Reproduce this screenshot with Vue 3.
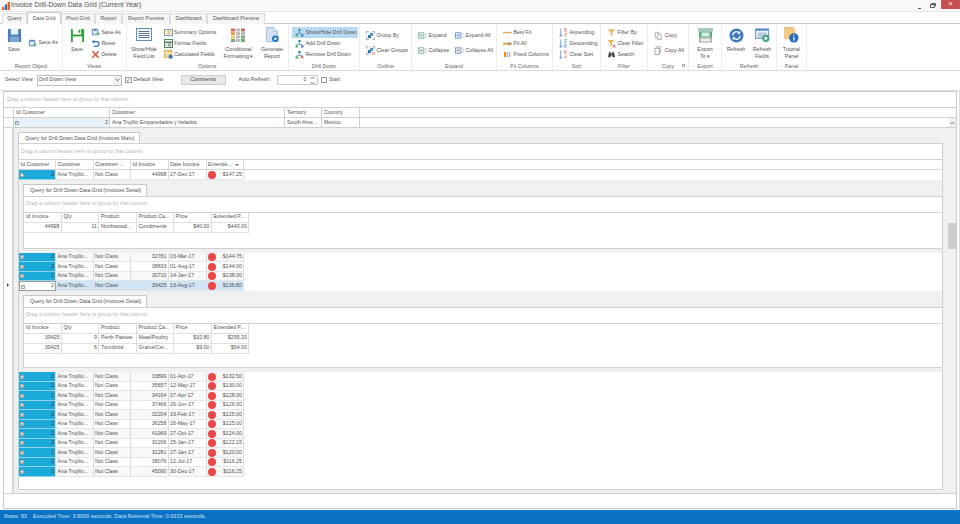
<script setup>
const tabs = [
  { t: 'Query', w: 25 }, { t: 'Data Grid', w: 34, active: true }, { t: 'Pivot Grid', w: 34 }, { t: 'Report', w: 27 },
  { t: 'Report Preview', w: 48 }, { t: 'Dashboard', w: 37 }, { t: 'Dashboard Preview', w: 58 }
]
const rowsA = [
  ['32781', '03-Mar-17', '$144.75'], ['38833', '01-Aug-17', '$144.00'], ['30710', '14-Jan-17', '$138.00']
]
const rowsB = [
  ['33899', '01-Apr-17', '$132.50'], ['35657', '12-May-17', '$130.00'], ['34164', '07-Apr-17', '$128.00'],
  ['37466', '26-Jun-17', '$126.00'], ['32204', '19-Feb-17', '$125.00'], ['36258', '26-May-17', '$125.00'],
  ['41969', '27-Oct-17', '$124.00'], ['31206', '25-Jan-17', '$122.15'], ['31281', '27-Jan-17', '$120.00'],
  ['38076', '12-Jul-17', '$116.25'], ['45090', '30-Dec-17', '$116.25']
]
const mainHead = ['Id Customer', 'Customer', 'Customer ...', 'Id Invoice', 'Date Invoice', 'Extende...']
const detailHead = ['Id Invoice', 'Qty', 'Product', 'Product Ca...', 'Price', 'Extended P...']
const detail1 = [['44998', '11', 'Northwood...', 'Condiments', '$40.00', '$440.00']]
const detail2 = [
  ['39425', '9', 'Perth Pasties', 'Meat/Poultry', '$32.80', '$295.20'],
  ['39425', '6', 'Tunnbröd', 'Grains/Cer...', '$9.00', '$54.00']
]
const col2 = (a, b) => [{ i: a[0], t: a[1] }, { i: b[0], t: b[1] }]
const smallSets = {
  views: [['saveas', 'Save As'], ['reset', 'Reset'], ['del', 'Delete']],
  options: [['sum', 'Summary Options'], ['fmt', 'Format Fields'], ['calc', 'Calculated Fields']],
  drill: [['tree', 'Show/Hide Drill Down'], ['tree', 'Add Drill Down'], ['treex', 'Remove Drill Down']],
  outline: col2(['group', 'Group By'], ['cleargroup', 'Clear Groups']),
  exp1: col2(['expg', 'Expand'], ['colg', 'Collapse']),
  exp2: col2(['expb', 'Expand All'], ['colb', 'Collapse All']),
  fit: [['best', 'Best Fit'], ['fitall', 'Fit All'], ['fixed', 'Fixed Columns']],
  sort: [['asc', 'Ascending'], ['desc', 'Descending'], ['clearsort', 'Clear Sort']],
  filter: [['funnel', 'Filter By'], ['funnelx', 'Clear Filter'], ['binoc', 'Search']],
  copy: col2(['copy', 'Copy'], ['copy2', 'Copy All'])
}
const norm = (list) => list.map((x) => (Array.isArray(x) ? { i: x[0], t: x[1] } : x))
const sets = Object.fromEntries(Object.entries(smallSets).map(([k, v]) => [k, norm(v)]))
</script>

<template>
  <div class="app">
    <svg class="defs" width="0" height="0">
      <symbol id="logo" viewBox="0 0 10 10"><rect x="0" y="6" width="3" height="4" fill="#e8632a"/><rect x="3.500" y="3" width="3" height="7" fill="#2f6fc0"/><rect x="7" y="0" width="3" height="10" fill="#e8632a"/></symbol>
      <symbol id="saveb" viewBox="0 0 16 16"><path d="M1 1h14v14H1z" fill="#4a7cb8"/><rect x="4" y="1" width="8" height="6" fill="#e8f0f8"/><rect x="3" y="9" width="10" height="6" fill="#7ea5d4"/></symbol>
      <symbol id="saveg" viewBox="0 0 16 16"><path d="M1 1h14v14H1z" fill="#2ba13a"/><rect x="3" y="1" width="9" height="6" fill="#fff"/><rect x="9" y="2" width="2" height="3" fill="#2ba13a"/><rect x="3" y="9" width="10" height="6" fill="#fff"/></symbol>
      <symbol id="saveas" viewBox="0 0 10 10"><path d="M1.500 1.500h6v6h-6z" fill="#dfeaf5" stroke="#4f7fb8"/><rect x="3" y="1" width="3" height="2" fill="#4f7fb8"/><path d="M6 6.500h3.500M8 5v3" stroke="#4aa560"/></symbol>
      <symbol id="reset" viewBox="0 0 10 10"><path d="M2 3h4.500a2.500 2.500 0 0 1 0 5H3" fill="none" stroke="#2f6fc0" stroke-width="1.300"/><path d="M3.500 .8 1 3l2.500 2.200z" fill="#2f6fc0"/></symbol>
      <symbol id="del" viewBox="0 0 10 10"><path d="M1.500 1.500l7 7M8.500 1.500l-7 7" stroke="#e2483a" stroke-width="1.500"/></symbol>
      <symbol id="sum" viewBox="0 0 10 10"><rect x=".5" y="1.500" width="9" height="7" fill="#fdf5e0" stroke="#6c8fbc"/><path d="M3 3.500h4L5 5l2 1.500H3" fill="none" stroke="#d89a2b" stroke-width=".8"/></symbol>
      <symbol id="fmt" viewBox="0 0 10 10"><rect x=".5" y=".5" width="9" height="9" fill="#fff" stroke="#3d7a4a"/><path d="M.5 3.500h9" stroke="#3d7a4a" stroke-width="1.500"/><path d="M2 5.500h1M2 7.500h1M4.500 5.500h3.500M4.500 7.500h3.500" stroke="#555"/></symbol>
      <symbol id="calc" viewBox="0 0 10 10"><rect x=".5" y=".5" width="8" height="8" fill="#efc56e" stroke="#d8a445"/><path d="M3 .5v8M.5 3.500h8" stroke="#fff"/><circle cx="7.500" cy="7.500" r="2.300" fill="#2f78c4"/></symbol>
      <symbol id="fieldlist" viewBox="0 0 16 13"><rect x=".5" y=".5" width="15" height="12" fill="#f3f7fb" stroke="#5d8fc6"/><path d="M2.500 3.500h11M2.500 5.500h11M2.500 7.500h11M2.500 9.500h11" stroke="#5c7290"/></symbol>
      <symbol id="cond" viewBox="0 0 15 14"><g fill="#d8694f"><rect x="0" y="0" width="4" height="3"/><rect x="0" y="3.500" width="4" height="3" fill="#e3a04d"/><rect x="0" y="7" width="4" height="3" fill="#e8c870"/><rect x="0" y="10.500" width="4" height="3" fill="#6db07a"/></g><g fill="#bdbdbd"><rect x="5" y="0" width="4" height="3"/><rect x="5" y="3.500" width="4" height="3"/><rect x="5" y="7" width="4" height="3"/><rect x="5" y="10.500" width="4" height="3"/><rect x="10" y="0" width="4" height="3" fill="#d8694f"/><rect x="10" y="3.500" width="4" height="3"/><rect x="10" y="7" width="4" height="3" fill="#6db07a"/><rect x="10" y="10.500" width="4" height="3" fill="#6db07a"/></g></symbol>
      <symbol id="report" viewBox="0 0 14 17"><path d="M.5.5h8l4 4v11H.5z" fill="#cfe0f2" stroke="#9fbbd9"/><path d="M8.500.5v4h4" fill="#fff" stroke="#9fbbd9"/><circle cx="10" cy="12.500" r="3.500" fill="#1f78c8"/><circle cx="10" cy="12.500" r="1.400" fill="#fff"/></symbol>
      <symbol id="tree" viewBox="0 0 10 10"><path d="M5 3v3M2 8V6h6v2" fill="none" stroke="#5a8fb0" stroke-width=".8"/><rect x="3.500" y="1" width="3" height="2.500" fill="#4c9aa8"/><rect x=".5" y="7" width="3" height="2.500" fill="#55b07a"/><rect x="6.500" y="7" width="3" height="2.500" fill="#4f83c4"/></symbol>
      <symbol id="treex" viewBox="0 0 10 10"><path d="M5 3v3M2 8V6h6v2" fill="none" stroke="#5a8fb0" stroke-width=".8"/><rect x="3.500" y="1" width="3" height="2.500" fill="#4c9aa8"/><rect x=".5" y="7" width="3" height="2.500" fill="#55b07a"/><path d="M6.500 6.500l3 3M9.500 6.500l-3 3" stroke="#d8483a"/></symbol>
      <symbol id="group" viewBox="0 0 10 10"><path d="M.5 3V.5H3M7 .5h2.500V3M.5 7v2.500H3M7 9.500h2.500V7" fill="none" stroke="#7d8f9f" stroke-width=".8"/><rect x="2" y="4.500" width="3.500" height="3.500" fill="#2f70b5"/><rect x="4.500" y="2" width="3.500" height="3.500" fill="#4c93d0"/></symbol>
      <symbol id="cleargroup" viewBox="0 0 10 10"><path d="M.5 3V.5H3M7 .5h2.500V3M.5 7v2.500H3" fill="none" stroke="#7d8f9f" stroke-width=".8"/><rect x="2" y="4.500" width="3.500" height="3.500" fill="#2f70b5"/><rect x="4.500" y="2" width="3.500" height="3.500" fill="#4c93d0"/><path d="M7 7l2.500 2.500M9.500 7L7 9.500" stroke="#d8483a"/></symbol>
      <symbol id="expg" viewBox="0 0 10 10"><rect x=".5" y="2" width="6" height="6" fill="#e6f3ec" stroke="#7cb8a0"/><path d="M2 5h3M3.500 3.500v3" stroke="#7cb8a0" stroke-width=".8"/><path d="M8 3.500h1.500M8 6.500h1.500" stroke="#999"/></symbol>
      <symbol id="colg" viewBox="0 0 10 10"><rect x=".5" y="2" width="6" height="6" fill="#e6f3ec" stroke="#7cb8a0"/><path d="M2 5h3" stroke="#d8604a"/><path d="M8 3.500h1.500M8 6.500h1.500" stroke="#999"/></symbol>
      <symbol id="expb" viewBox="0 0 10 10"><rect x=".5" y="2" width="6" height="6" fill="#e3edf8" stroke="#6a96cc"/><path d="M2 5h3M3.500 3.500v3" stroke="#6a96cc" stroke-width=".8"/><path d="M8 3.500h1.500M8 6.500h1.500" stroke="#999"/></symbol>
      <symbol id="colb" viewBox="0 0 10 10"><rect x=".5" y="2" width="6" height="6" fill="#e3edf8" stroke="#6a96cc"/><path d="M2 5h3" stroke="#d8604a"/><path d="M8 3.500h1.500M8 6.500h1.500" stroke="#999"/></symbol>
      <symbol id="best" viewBox="0 0 10 10"><path d="M0 5h3M7 5h3" stroke="#e89a2e"/><path d="M3 3.500 5 5 3 6.500zM7 3.500 5 5l2 1.500z" fill="#e07a28"/></symbol>
      <symbol id="fitall" viewBox="0 0 10 10"><rect x="0" y="4" width="10" height="2.400" fill="#eca24a"/><path d="M6 2.800 9.500 5.200 6 7.600z" fill="#999"/></symbol>
      <symbol id="fixed" viewBox="0 0 10 10"><rect x="1" y="2" width="2.500" height="6" fill="#ee8a1e"/><rect x="4.300" y="2" width="1.600" height="6" fill="#bbb"/><rect x="6.800" y="2" width="1.600" height="6" fill="#bbb"/></symbol>
      <symbol id="asc" viewBox="0 0 10 10"><path d="M2 .5v8.500M.5 7.500 2 9.500l1.500-2" fill="none" stroke="#2f78c4" stroke-width=".8"/><path d="M6 .5h2v3H6zM6 6h2.500L6 9h2.500" fill="none" stroke="#d8604a" stroke-width=".7"/></symbol>
      <symbol id="desc" viewBox="0 0 10 10"><path d="M2 .5v8.500M.5 7.500 2 9.500l1.500-2" fill="none" stroke="#2f78c4" stroke-width=".8"/><path d="M6 .5h2.500L6 3.500h2.500M6 6h2v3H6z" fill="none" stroke="#3d8bd0" stroke-width=".7"/></symbol>
      <symbol id="clearsort" viewBox="0 0 10 10"><path d="M2 .5v8.500M.5 7.500 2 9.500l1.500-2" fill="none" stroke="#2f78c4" stroke-width=".8"/><path d="M6 1h2v3H6z" fill="none" stroke="#d8604a" stroke-width=".7"/><path d="M5.500 6l3.500 3.500M9 6 5.500 9.500" stroke="#d8604a" stroke-width=".7"/></symbol>
      <symbol id="funnel" viewBox="0 0 10 10"><path d="M1 1.500h8L6 5v4L4 8V5z" fill="#edb45c"/></symbol>
      <symbol id="funnelx" viewBox="0 0 10 10"><path d="M.5 1h7.500L5.500 4.500v3.500L3.500 7V4.500z" fill="#edb45c"/><path d="M6.500 6.500l3 3M9.500 6.500l-3 3" stroke="#d8483a"/></symbol>
      <symbol id="binoc" viewBox="0 0 10 10"><path d="M1 8 2.500 2h1.500v2h2V2h1.500L9 8H6V6H4v2z" fill="#444"/></symbol>
      <symbol id="copy" viewBox="0 0 10 10"><path d="M1.500 1.500h4v6h-4z" fill="#fff" stroke="#aaa"/><path d="M4 3.500h4v6H4z" fill="#fff" stroke="#aaa"/></symbol>
      <symbol id="copy2" viewBox="0 0 10 10"><path d="M2.500.5h5v6.500h-5z" fill="#f4f4f4" stroke="#bbb"/><path d="M1 2.500h5v7H1z" fill="#fff" stroke="#999"/></symbol>
      <symbol id="export" viewBox="0 0 15 15"><rect x="0" y="0" width="15" height="3.500" fill="#a9c7b7"/><rect x="1" y="3.500" width="13" height="6" fill="#5cae8a"/><rect x="3.500" y="4.500" width="8" height="4" fill="#d9efe4"/><rect x="1" y="9.500" width="13" height="5" fill="#a6a6a6"/><rect x="2.500" y="10.500" width="10" height="3" fill="#eee"/></symbol>
      <symbol id="refresh" viewBox="0 0 14 14"><circle cx="7" cy="7" r="6.500" fill="#3d78bd"/><path d="M3.500 7a3.500 3.500 0 0 1 6-2.500M10.500 7a3.500 3.500 0 0 1-6 2.500" fill="none" stroke="#eaf2fb" stroke-width="1.300"/><path d="M10.500 2.500v3h-3zM3.500 11.500v-3h3z" fill="#eaf2fb"/></symbol>
      <symbol id="rfields" viewBox="0 0 16 15"><rect x=".5" y=".5" width="14" height="10" fill="#f1f6fb" stroke="#5d8fc6"/><rect x=".5" y=".5" width="14" height="2" fill="#5d8fc6"/><path d="M2.500 5h10M2.500 7h7M2.500 9h7" stroke="#8aa5c4"/><circle cx="11.500" cy="10.500" r="4" fill="#4aa587"/><circle cx="11.500" cy="10.500" r="1.800" fill="#d8efe5"/></symbol>
      <symbol id="tutorial" viewBox="0 0 16 17"><path d="M0 0h11v2H0z" fill="#e9bf74"/><path d="M0 2h12v11H0z" fill="#f3cb85"/><circle cx="10.500" cy="11.500" r="5" fill="#2a6db5"/><rect x="10" y="10.500" width="1.200" height="4" fill="#fff"/><rect x="10" y="8.300" width="1.200" height="1.300" fill="#fff"/></symbol>
    </svg>

    <header class="title">
      <svg class="logo"><use href="#logo"/></svg>
      <span class="title-text">Invoice Drill-Down Data Grid (Current Year)</span>
      <span class="spacer"></span>
      <span class="win-min"></span>
      <svg class="win-rest" viewBox="0 0 7 6"><path d="M2 1.500V.5h4.500v3H5.500M.5 1.800h4.500v3.700H.5z" fill="none" stroke="#333"/></svg>
      <span class="win-close">×</span>
    </header>

    <nav class="tabs">
      <span v-for="t in tabs" :key="t.t" class="tab" :class="{ on: t.active }" :style="{ width: t.w + 'px' }">{{ t.t }}</span>
    </nav>

    <section class="ribbon">
      <div class="grp" style="width:63px">
        <div class="grp-body">
          <div class="lg" style="width:28px"><svg class="i15"><use href="#saveb"/></svg><span>Save</span></div>
          <div class="stack mid"><div class="sm"><svg class="i9"><use href="#saveas"/></svg>Save As</div></div>
        </div>
        <div class="grp-label">Report Object</div>
      </div>
      <div class="grp" style="width:63.500px">
        <div class="grp-body">
          <div class="lg" style="width:28px"><svg class="i15"><use href="#saveg"/></svg><span>Save</span></div>
          <div class="stack"><div v-for="s in sets.views" :key="s.t" class="sm"><svg class="i9"><use :href="'#' + s.i"/></svg>{{ s.t }}</div></div>
        </div>
        <div class="grp-label">Views</div>
      </div>
      <div class="grp" style="width:162.500px">
        <div class="grp-body">
          <div class="lg" style="width:35px"><svg class="i-f"><use href="#fieldlist"/></svg><span>Show/Hide<br>Field List</span></div>
          <div class="stack opts"><div v-for="s in sets.options" :key="s.t" class="sm"><svg class="i9"><use :href="'#' + s.i"/></svg>{{ s.t }}</div></div>
          <div class="lg" style="width:33px"><svg class="i15"><use href="#cond"/></svg><span>Conditional<br>Formatting ▾</span></div>
          <div class="lg" style="width:34px"><svg class="i15 tall"><use href="#report"/></svg><span>Generate<br>Report</span></div>
        </div>
        <div class="grp-label">Options</div>
      </div>
      <div class="grp" style="width:71px">
        <div class="grp-body pad3">
          <div class="stack wide"><div v-for="(s, i) in sets.drill" :key="s.t" class="sm" :class="{ act: i === 0 }"><svg class="i9"><use :href="'#' + s.i"/></svg>{{ s.t }}</div></div>
        </div>
        <div class="grp-label">Drill Down</div>
      </div>
      <div class="grp" style="width:52px">
        <div class="grp-body pad6">
          <div class="stack two"><div v-for="s in sets.outline" :key="s.t" class="sm"><svg class="i9"><use :href="'#' + s.i"/></svg>{{ s.t }}</div></div>
        </div>
        <div class="grp-label">Outline</div>
      </div>
      <div class="grp" style="width:85px">
        <div class="grp-body pad6">
          <div class="stack two" style="width:37px"><div v-for="s in sets.exp1" :key="s.t" class="sm"><svg class="i9"><use :href="'#' + s.i"/></svg>{{ s.t }}</div></div>
          <div class="stack two"><div v-for="s in sets.exp2" :key="s.t" class="sm"><svg class="i9"><use :href="'#' + s.i"/></svg>{{ s.t }}</div></div>
        </div>
        <div class="grp-label">Expand</div>
      </div>
      <div class="grp" style="width:56px">
        <div class="grp-body pad6"><div class="stack"><div v-for="s in sets.fit" :key="s.t" class="sm"><svg class="i9"><use :href="'#' + s.i"/></svg>{{ s.t }}</div></div></div>
        <div class="grp-label">Fit Columns</div>
      </div>
      <div class="grp" style="width:48px">
        <div class="grp-body pad6"><div class="stack"><div v-for="s in sets.sort" :key="s.t" class="sm"><svg class="i9"><use :href="'#' + s.i"/></svg>{{ s.t }}</div></div></div>
        <div class="grp-label">Sort</div>
      </div>
      <div class="grp" style="width:47px">
        <div class="grp-body pad6"><div class="stack"><div v-for="s in sets.filter" :key="s.t" class="sm"><svg class="i9"><use :href="'#' + s.i"/></svg>{{ s.t }}</div></div></div>
        <div class="grp-label">Filter</div>
      </div>
      <div class="grp" style="width:41px">
        <div class="grp-body pad6"><div class="stack two"><div v-for="s in sets.copy" :key="s.t" class="sm"><svg class="i9"><use :href="'#' + s.i"/></svg>{{ s.t }}</div></div></div>
        <div class="grp-label">Copy<i class="launcher"></i></div>
      </div>
      <div class="grp" style="width:33px">
        <div class="grp-body center"><div class="lg" style="width:33px"><svg class="i15"><use href="#export"/></svg><span>Export<br>To ▾</span></div></div>
        <div class="grp-label">Export</div>
      </div>
      <div class="grp" style="width:55px">
        <div class="grp-body center">
          <div class="lg" style="width:26px"><svg class="i15"><use href="#refresh"/></svg><span>Refresh</span></div>
          <div class="lg" style="width:26px"><svg class="i15"><use href="#rfields"/></svg><span>Refresh<br>Fields</span></div>
        </div>
        <div class="grp-label">Refresh</div>
      </div>
      <div class="grp" style="width:30px">
        <div class="grp-body center"><div class="lg" style="width:30px"><svg class="i15 tall"><use href="#tutorial"/></svg><span>Tutorial<br>Panel</span></div></div>
        <div class="grp-label">Panel</div>
      </div>
    </section>

    <section class="viewbar">
      <label class="lbl">Select View:</label>
      <div class="select"><span>Drill Down View</span><i class="sel-btn"><svg viewBox="0 0 6 4" width="5" height="4"><path d="M.5.5 3 3 5.500.5" fill="none" stroke="#555"/></svg></i></div>
      <span class="check on">✓</span><span class="chk-text dv">Default View</span>
      <button class="comments">Comments</button>
      <label class="lbl auto">Auto Refresh:</label>
      <div class="spin"><span>0</span><i class="spin-btn">
        <svg viewBox="0 0 5 9" width="5" height="9"><path d="M.5 3 2.500 1l2 2M.5 6l2 2 2-2" fill="none" stroke="#555" stroke-width=".8"/></svg></i></div>
      <span class="check start"></span><span class="chk-text">Start</span>
    </section>

    <main class="outer-wrap">
      <div class="outer">
        <div class="hint top-hint">Drag a column header here to group by that column</div>
        <div class="top-row head">
          <span class="ind-c"></span><span class="c c1">Id Customer</span><span class="c c2">Customer</span><span class="c c3">Territory</span><span class="c c4">Country</span>
        </div>
        <div class="top-row val">
          <span class="ind-c"></span>
          <span class="c c1 sel r"><i class="exp dark">−</i>2</span>
          <span class="c c2">Ana Trujillo Emparedados y helados</span>
          <span class="c c3">South Ame...</span>
          <span class="c c4">Mexico</span>
          <span class="fill-c"></span>
          <span class="sb-up"><svg viewBox="0 0 6 4" width="5" height="4"><path d="M.5 3.500 3 1l2.500 2.500" fill="none" stroke="#666"/></svg></span>
        </div>

        <div class="body">
          <div class="indicator"><span class="arrow"></span></div>
          <div class="content">
            <div class="tab-cap main-cap">Query for Drill Down Data Grid (Invoices Main)</div>
            <div class="panel">
              <div class="hint main-hint">Drag a column header here to group by that column</div>
              <div class="m-row m-head">
                <span v-for="(h, i) in mainHead" :key="h" class="mc" :class="{ sort: i === 5 }">{{ h }}<i v-if="i === 5" class="sort-ico"></i></span>
              </div>
              <div class="m-row">
                <span class="mc blue r"><i class="exp">−</i>2</span><span class="mc">Ana Trujillo...</span><span class="mc">Not Class</span>
                <span class="mc r">44998</span><span class="mc">27-Dec-17</span><span class="mc val-c"><i class="dot"></i>$147.25</span>
              </div>

              <div class="band">
                <div class="tab-cap">Query for Drill Down Data Grid (Invoices Detail)</div>
                <div class="d-panel">
                  <div class="hint d-hint">Drag a column header here to group by that column</div>
                  <div class="d-row d-head"><span v-for="h in detailHead" :key="h" class="dc">{{ h }}</span></div>
                  <div v-for="(r, i) in detail1" :key="i" class="d-row">
                    <span class="dc r">{{ r[0] }}</span><span class="dc r">{{ r[1] }}</span><span class="dc">{{ r[2] }}</span><span class="dc">{{ r[3] }}</span><span class="dc r">{{ r[4] }}</span><span class="dc r">{{ r[5] }}</span>
                  </div>
                </div>
              </div>

              <div v-for="(r, i) in rowsA" :key="r[0]" class="m-row" :class="{ alt: i % 2 === 0 }">
                <span class="mc blue r"><i class="exp">+</i>2</span><span class="mc">Ana Trujillo...</span><span class="mc">Not Class</span>
                <span class="mc r">{{ r[0] }}</span><span class="mc">{{ r[1] }}</span><span class="mc val-c"><i class="dot"></i>{{ r[2] }}</span>
              </div>
              <div class="m-row selected">
                <span class="mc focus r"><i class="exp dark">−</i>2</span><span class="mc">Ana Trujillo...</span><span class="mc">Not Class</span>
                <span class="mc r">39425</span><span class="mc">13-Aug-17</span><span class="mc val-c"><i class="dot"></i>$136.80</span>
              </div>

              <div class="band second">
                <div class="tab-cap">Query for Drill Down Data Grid (Invoices Detail)</div>
                <div class="d-panel">
                  <div class="hint d-hint">Drag a column header here to group by that column</div>
                  <div class="d-row d-head"><span v-for="h in detailHead" :key="h" class="dc">{{ h }}</span></div>
                  <div v-for="(r, i) in detail2" :key="i" class="d-row">
                    <span class="dc r">{{ r[0] }}</span><span class="dc r">{{ r[1] }}</span><span class="dc">{{ r[2] }}</span><span class="dc">{{ r[3] }}</span><span class="dc r">{{ r[4] }}</span><span class="dc r">{{ r[5] }}</span>
                  </div>
                </div>
              </div>

              <div v-for="(r, i) in rowsB" :key="r[0]" class="m-row" :class="{ alt: i % 2 === 0 }">
                <span class="mc blue r"><i class="exp">+</i>2</span><span class="mc">Ana Trujillo...</span><span class="mc">Not Class</span>
                <span class="mc r">{{ r[0] }}</span><span class="mc">{{ r[1] }}</span><span class="mc val-c"><i class="dot"></i>{{ r[2] }}</span>
              </div>
            </div>
          </div>
          <div class="scroll"><span class="thumb"></span></div>
        </div>
        <div class="foot"></div>
      </div>
    </main>

    <footer class="status"><span class="st-rows">Rows: 93</span><span>Executed Time: 3.8060 seconds. Data Retrieval Time: 0.0015 seconds.</span></footer>
  </div>
</template>

<style>
html, body { margin: 0; padding: 0; background: #fff; }
</style>

<style scoped>
* { box-sizing: border-box; }
.app { width: 960px; height: 524px; overflow: hidden; display: flex; flex-direction: column; font-family: "Liberation Sans", Arial, sans-serif; font-size: 5.3px; line-height: 1; color: #525252; background: #fff; }
.defs { position: absolute; }
.title { height: 12px; flex: none; display: flex; align-items: center; background: #f8f8f8; border-bottom: 1px solid #e6e6e6; padding-left: 2px; }
.logo { width: 8px; height: 8px; margin-right: 1px; }
.title-text { font-size: 6.8px; color: #555; }
.spacer { flex: 1; }
.win-min { width: 3px; height: 1px; background: #555; margin-top: 5px; margin-right: 9px; }
.win-rest { width: 6px; height: 5px; margin-right: 5px; }
.win-close { width: 19px; height: 9px; margin-top: -2px; background: #c75050; color: #fff; font-size: 8px; line-height: 8px; text-align: center; }

.tabs { height: 12px; flex: none; display: flex; gap: 0; padding-left: 2px; border-bottom: 1px solid #c8c8c8; }
.tab { height: 11px; margin-top: 1px; display: flex; align-items: center; justify-content: center; background: #f6f6f6; border: 1px solid #dcdcdc; border-bottom: 0; color: #555; }
.tab.on { background: #fff; height: 12px; margin-top: 0; border-color: #c8c8c8; position: relative; }

.ribbon { height: 47px; flex: none; display: flex; border-bottom: 1px solid #ddd; }
.grp { height: 46px; flex: none; display: flex; flex-direction: column; position: relative; border-right: 1px solid #ececec; margin: 0; }
.grp-body { flex: 1; display: flex; padding-top: 3px; padding-left: 0; min-height: 0; }
.grp-label { height: 9px; flex: none; text-align: center; color: #666; line-height: 10px; position: relative; }
.pad3 { padding-left: 3px; }
.pad6 { padding-left: 6px; }
.center { justify-content: center; }
.lg { display: flex; flex-direction: column; align-items: center; flex: none; text-align: center; line-height: 7px; margin-top: 1px; }
.lg span { margin-top: 3px; white-space: nowrap; }
.i15 { width: 15px; height: 15px; flex: none; }
.tall { height: 16px; margin-top: -1px; }
.i-f { width: 16px; height: 13px; margin-bottom: 2px; margin-top: 0; }
.i9 { width: 9px; height: 9px; margin-right: 1.500px; flex: none; }
.stack { display: flex; flex-direction: column; flex: none; padding-top: 0; }
.stack.mid { justify-content: center; height: 32px; }
.stack.two { padding-top: 3px; gap: 4px; }
.stack.wide { width: 66px; }
.stack.opts { width: 58.500px; margin-left: 2px; }
.sm { height: 11px; display: flex; align-items: center; white-space: nowrap; }
.sm.act { background: #b9d9f1; padding-left: 3px; margin-left: 0; }
.stack.wide .sm { padding-left: 3px; }
.launcher { position: absolute; right: 3px; top: 3px; width: 3px; height: 3px; border: 1px solid #aaa; }

.viewbar { height: 20px; flex: none; display: flex; align-items: center; padding: 0 0 1px 5px; border-bottom: 1px solid #ddd; }
.lbl { width: 32px; flex: none; }
.select { width: 85px; height: 11px; display: flex; align-items: center; border: 1px solid #bbb; padding-left: 1px; justify-content: space-between; }
.sel-btn { width: 8px; height: 9px; display: flex; align-items: center; justify-content: center; background: #f2f2f2; }
.check { width: 6.500px; height: 6.500px; border: 1px solid #999; margin-left: 3px; flex: none; display: flex; align-items: center; justify-content: center; font-size: 6px; font-style: normal; }
.chk-text { margin-left: 2px; }
.chk-text.dv { width: 31px; white-space: nowrap; }
.comments { width: 45px; height: 10px; margin-left: 16px; padding: 0; border: 1px solid #ccc; background: #e8e8e8; font: inherit; color: #444; }
.lbl.auto { margin-left: 13px; width: 38px; }
.spin { width: 41px; height: 10px; display: flex; align-items: center; justify-content: flex-end; border: 1px solid #ccc; }
.spin-btn { width: 8px; height: 8px; margin-left: 2px; display: flex; align-items: center; justify-content: center; }
.check.start { margin-left: 3px; }

.outer-wrap { flex: 1; min-height: 0; display: flex; padding: 0 2px 1.500px 3px; border-right: 1px solid #ddd; }
.outer { flex: 1; display: flex; flex-direction: column; border: 1px solid #ccc; min-width: 0; }
.hint { color: #b4b4b4; display: flex; align-items: center; flex: none; padding-left: 3px; }
.top-hint { height: 16px; border-bottom: 1px solid #d0d0d0; }
.top-row { height: 10px; flex: none; display: flex; border-bottom: 1px solid #d0d0d0; }
.ind-c { width: 10px; border-right: 1px solid #d0d0d0; flex: none; }
.c { height: 100%; display: flex; align-items: center; padding: 0 1px 0 2px; border-right: 1px solid #d0d0d0; flex: none; overflow: hidden; white-space: nowrap; }
.c1 { width: 96px; }
.c2 { width: 175px; }
.c3 { width: 37px; }
.c4 { width: 38px; }
.sel { background: #e6f0f8; }
.r { justify-content: flex-end; }
.fill-c { width: 589px; flex: none; }
.sb-up { flex: 1; display: flex; align-items: center; justify-content: center; background: #f0f0f0; }

.body { height: 366px; flex: none; display: flex; border-bottom: 1px solid #d0d0d0; }
.indicator { width: 10px; flex: none; border-right: 2px solid #d6d6d6; padding-top: 155px; display: flex; justify-content: center; }
.arrow { width: 0; height: 0; border-left: 2.500px solid #444; border-top: 2px solid transparent; border-bottom: 2px solid transparent; margin-right: 1px; }
.content { width: 934px; flex: none; background: #f0f0f0; padding: 4px 5px 3px 4px; display: flex; flex-direction: column; }
.tab-cap { width: 122px; height: 11px; flex: none; display: flex; align-items: center; padding: 1px 0 0 6px; background: #fff; border: 1px solid #c8c8c8; border-bottom: 0; white-space: nowrap; }
.panel { flex: 1; background: #fff; border: 1px solid #cfcfcf; }
.main-hint { height: 16px; border-bottom: 1px solid #d0d0d0; padding-left: 2px; }
.m-row { height: 9.500px; display: grid; grid-template-columns: 37px 37.500px 37.500px 37.500px 38px 37.500px; width: 225px; }
.m-head { height: 10px; border-bottom: 1px solid #d4d4d4; width: auto; }
.mc { display: flex; align-items: center; padding: 0 1px 0 1.500px; border-right: 1px solid #dcdcdc; border-bottom: 1px solid #e6e6e6; white-space: nowrap; overflow: hidden; background: #fff; }
.m-head .mc { border-bottom: 0; }
.m-row.alt .mc { background: #f8f8f8; }
.blue, .m-row.alt .blue { background: #1caadb; color: #1a4a66; position: relative; border-bottom-color: #8fd2ea; }
.focus { background: #fff; border: 1px solid #9a9a9a; position: relative; }
.selected .mc:not(.focus) { background: #cfe4f5; border-color: #d8e8f4; }
.exp { position: absolute; left: 1px; top: 2.500px; width: 4px; height: 4px; background: #fff; border: 1px solid #9aa; color: #333; display: flex; align-items: center; justify-content: center; font-size: 4px; font-style: normal; line-height: 1; }
.sel .exp { left: 0.500px; }
.exp.dark { background: transparent; }
.c1 { position: relative; }
.sort { position: relative; }
.sort-ico { position: absolute; right: 4px; top: 4px; width: 0; height: 0; border-left: 2px solid transparent; border-right: 2px solid transparent; border-top: 2.500px solid #666; }
.val-c { justify-content: flex-end; position: relative; }
.dot { position: absolute; left: 1px; top: 0.500px; width: 8px; height: 8px; border-radius: 50%; background: #ec4646; }

.band { height: 73px; margin-top: 0; background: #f0f0f0; padding: 4px 0 4px 4px; display: flex; flex-direction: column; }
.band.second { height: 81.500px; }
.band .tab-cap { width: 124px; height: 12px; padding-top: 1.500px; }
.d-panel { flex: 1; background: #fff; border: 1px solid #cfcfcf; border-right: 0; }
.d-hint { height: 16px; border-bottom: 1px solid #d0d0d0; padding-left: 2px; }
.d-row { height: 10px; display: grid; grid-template-columns: 37.500px 37.500px 37.500px 37px 38px 37.500px; width: 225px; }
.dc { display: flex; align-items: center; padding: 0 2px; border-right: 1px solid #dcdcdc; border-bottom: 1px solid #e0e0e0; white-space: nowrap; overflow: hidden; }
.dc.r { justify-content: flex-end; padding-right: 1px; }

.scroll { flex: 1; background: #f0f0f0; padding-top: 95px; }
.thumb { display: block; height: 26px; background: #cdcdcd; }
.foot { flex: 1; }

.status { height: 14px; flex: none; background: #0a72c4; color: #cfe4f6; display: flex; align-items: center; padding-left: 4px; font-size: 5.5px; }
.st-rows { width: 29px; flex: none; }
</style>
